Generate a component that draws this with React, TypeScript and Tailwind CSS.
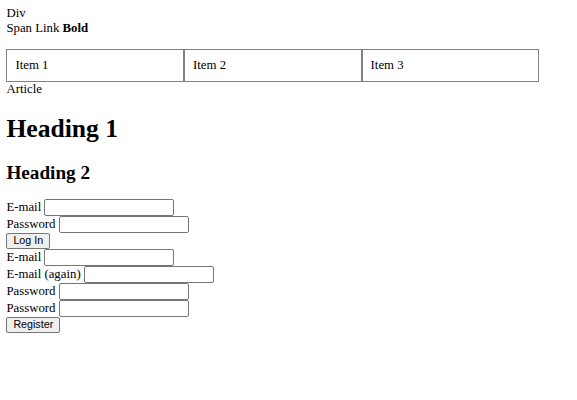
export default function App() {
  const serif = { fontFamily: '"Liberation Serif", "Times New Roman", serif' };
  const row = 'flex h-[17px] items-center gap-[3.2px]';
  const field = 'h-[16.8px] w-[130px] border border-[#767676] rounded-[2px] bg-white';
  const button =
    'h-[16px] px-[6px] border border-[#767676] rounded-[2px] bg-[#efefef] text-[10.7px] leading-none font-["Liberation_Sans",Arial,sans-serif] text-black';

  return (
    <div className="min-h-[400px] bg-white p-[6.4px] text-[12.8px] leading-[1.15] text-black" style={serif}>
      <div>Div</div>
      <div>
        <span>Span</span> <a>Link</a> <b>Bold</b>
      </div>

      <ul className="mt-[12.8px] flex">
        {['Item 1', 'Item 2', 'Item 3'].map((item) => (
          <li key={item} className="w-[177.6px] border border-[#808080] px-[8px] py-[8.5px]">
            {item}
          </li>
        ))}
      </ul>

      <article>Article</article>

      <h1 className="mt-[17.15px] mb-[18.2px] text-[25.6px] font-bold leading-[1.15]">Heading 1</h1>
      <h2 className="mt-[15.9px] mb-[14.9px] text-[19.2px] font-bold leading-[1.15]">Heading 2</h2>

      <form>
        <div className={row}>
          E-mail <input type="email" className={field} />
        </div>
        <div className={row}>
          Password <input type="password" className={field} />
        </div>
        <button type="button" className={button}>
          Log In
        </button>
      </form>

      <form>
        <div className={row}>
          E-mail <input type="email" className={field} />
        </div>
        <div className={row}>
          E-mail (again) <input type="email" className={field} />
        </div>
        <div className={row}>
          Password <input type="password" className={field} />
        </div>
        <div className={row}>
          Password <input type="password" className={field} />
        </div>
        <button type="button" className={button}>
          Register
        </button>
      </form>
    </div>
  );
}
